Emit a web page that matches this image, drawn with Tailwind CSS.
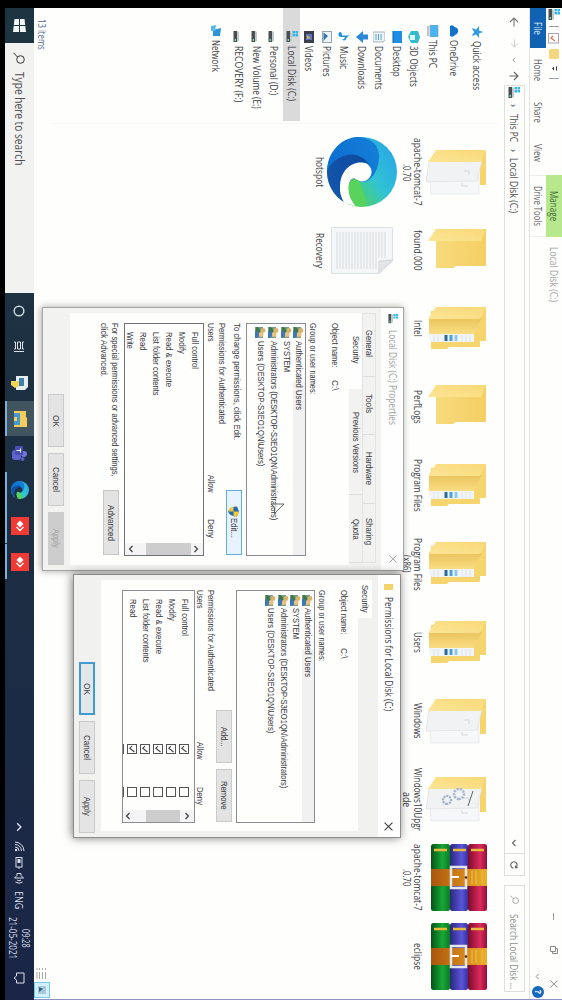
<!DOCTYPE html>
<html lang="en">
<head>
<meta charset="utf-8">
<title>Local Disk (C:)</title>
<script src="https://cdn.jsdelivr.net/npm/@tailwindcss/browser@4"></script>
</head>
<body class="bg-black">
<svg class="absolute size-0">
  <defs>
    <linearGradient id="fy" x1="0" y1="0" x2="0" y2="1"><stop offset="0" stop-color="#f4cf63"/><stop offset="1" stop-color="#f8da7c"/></linearGradient>
    <linearGradient id="fl" x1="0" y1="0" x2="1" y2="1"><stop offset="0" stop-color="#f8d978"/><stop offset="1" stop-color="#fde596"/></linearGradient>
    <linearGradient id="fm" x1="0" y1="0" x2="1" y2="0"><stop offset="0" stop-color="#e9c45e"/><stop offset="1" stop-color="#fadd82"/></linearGradient>
    <linearGradient id="ea" x1="0.3" y1="0" x2="0.85" y2="0.8"><stop offset="0" stop-color="#2aa9e4"/><stop offset=".45" stop-color="#30c3d4"/><stop offset=".8" stop-color="#4bd06e"/><stop offset="1" stop-color="#62d64a"/></linearGradient>
    <linearGradient id="eb" x1="0" y1="0" x2="0.4" y2="1"><stop offset="0" stop-color="#1580d8"/><stop offset="1" stop-color="#0c6fd0"/></linearGradient>
    <linearGradient id="ec" x1="0" y1="0" x2="1" y2="1"><stop offset="0" stop-color="#0d4a9c"/><stop offset="1" stop-color="#1456b0"/></linearGradient>
    <linearGradient id="rr" x1="0" y1="0" x2="0" y2="1"><stop offset="0" stop-color="#8e1036"/><stop offset=".35" stop-color="#dc2a5c"/><stop offset="1" stop-color="#7c0c2e"/></linearGradient>
    <linearGradient id="rb" x1="0" y1="0" x2="0" y2="1"><stop offset="0" stop-color="#35309a"/><stop offset=".35" stop-color="#5a55d8"/><stop offset="1" stop-color="#2b277c"/></linearGradient>
    <linearGradient id="rg" x1="0" y1="0" x2="0" y2="1"><stop offset="0" stop-color="#0b7a22"/><stop offset=".4" stop-color="#18a838"/><stop offset="1" stop-color="#065216"/></linearGradient>
    <linearGradient id="rt" x1="0" y1="0" x2="0" y2="1"><stop offset="0" stop-color="#e8b02c"/><stop offset=".35" stop-color="#d98c1c"/><stop offset="1" stop-color="#a9550e"/></linearGradient>
    <symbol id="folder" viewBox="0 0 46 62"><path d="M1 1H38V31L40 34V51H10Z" fill="url(#fy)"/><path d="M1 1L13 6V59L1 51Z" fill="url(#fl)"/></symbol>
    <symbol id="full" viewBox="0 0 46 62"><path d="M1 1H35V7H41V38L43 40V56H5Z" fill="#f6d56f"/><path d="M27 13H36V57L27 59Z" fill="#f2f5f7"/><path d="M29 17h7M29 21h7M29 25h7M29 49h7M29 53h7" stroke="#dde3e8" stroke-width="1"/><path d="M29 31h6" stroke="#8cc8ee" stroke-width="3"/><path d="M29 36h6" stroke="#4b9fdc" stroke-width="3"/><path d="M29 41h6" stroke="#2b6a9a" stroke-width="3"/><path d="M12 5L28 13V58L12 58Z" fill="url(#fm)"/><path d="M1 1L13 7V59L1 51Z" fill="url(#fl)"/></symbol>
    <symbol id="docs" viewBox="0 0 46 62"><path d="M1 1H36V7H10Z" fill="#f6d56f"/><path d="M24 8H45V56L30 57Z" fill="#f6f7f8" stroke="#dde0e3" stroke-width=".6"/><path d="M12 5L32 10L33 61L12 58Z" fill="#f0f2f4" stroke="#d8dce0" stroke-width=".6"/><path d="M22 23v-5h4M34 25h3v-6" fill="none" stroke="#dde1e6" stroke-width="1.5"/><path d="M1 1L13 6V59L1 51Z" fill="url(#fl)"/></symbol>
    <symbol id="gear" viewBox="0 0 46 62"><use href="#docs" width="46" height="62"/><path d="M15 14L30 19" stroke="#5a6b66" stroke-width="1"/><circle cx="18" cy="28" r="5" fill="none" stroke="#a9b8cc" stroke-width="2.5" stroke-dasharray="2.2 1"/><circle cx="24" cy="40" r="4" fill="none" stroke="#9fb0c6" stroke-width="2.2" stroke-dasharray="2 .9"/></symbol>
    <symbol id="edge" viewBox="0 0 70 70"><circle cx="35" cy="35" r="35" fill="url(#ea)"/><path d="M0 37C2 22 12 17 22 18C34 19 46 26 45 36L40 50L35 70C14 70 -1 54 0 37Z" fill="url(#eb)"/><path d="M30 27C20 31 15 43 19 53C22 62 28 68 35 70C48 70 60 62 65 53L50 45Z" fill="url(#ec)"/><path d="M25.500 36A9.500 9.500 0 1 1 43 40C40 43 41 47 48 48C56 48.500 63 46 69 41.500L65.500 53C60 56 55 57.500 50 57C34 57 25 46 25.500 36Z" fill="#fefefd"/><path d="M44 38C38 46 46 50 56 48C62 47 67 44 70 37L66 30Z" fill="#58d45c"/></symbol>
    <symbol id="rar" viewBox="0 0 67 57"><rect x="0" y="0" width="67" height="19" rx="2.500" fill="url(#rr)"/><rect x="0" y="19" width="67" height="18" rx="2.500" fill="url(#rb)"/><rect x="0" y="37" width="67" height="19" rx="2.500" fill="url(#rg)"/><path d="M6 3v13M6 21v13M6 40v13" stroke="#e9b93c" stroke-width="2.500"/><rect x="25" y="0" width="17" height="56" fill="url(#rt)"/><path d="M27 5H40M27 11H40M27 15H40" stroke="#f0c348" stroke-width="1"/><rect x="23" y="21" width="21" height="15" fill="none" stroke="#e4e6ea" stroke-width="2.500"/><path d="M33 36V28" stroke="#fff" stroke-width="2"/><circle cx="33.500" cy="21" r="1.300" fill="#4d2605"/></symbol>
    <symbol id="ppl" viewBox="0 0 11 11"><rect x="0" y="3" width="11" height="8" fill="#7c9a8a"/><circle cx="3.500" cy="3" r="2.400" fill="#d9b36a"/><circle cx="7.500" cy="5" r="2.500" fill="#e8c080"/><path d="M0 10q0-4 3.500-4t3 4z" fill="#3d7a4a"/><path d="M4 11q0-4 3.500-4T11 11z" fill="#3a78b8"/></symbol>
    <symbol id="disk" viewBox="0 0 12 12"><rect x="0" y="8" width="11" height="3.500" fill="#4a4f54"/><path d="M1 6H10L11 8H0Z" fill="#c4c8ca"/><rect x="8" y="9" width="2" height="1.300" fill="#6fe09a"/></symbol>
    <symbol id="cdisk" viewBox="0 0 12 12"><use href="#disk" width="12" height="12"/><path d="M0 0h2.500v2.500H0zM3 0h2.500v2.500H3zM0 3h2.500v2.500H0zM3 3h2.500v2.500H3z" fill="#31b7ea"/></symbol>
    <symbol id="mag" viewBox="0 0 12 12"><circle cx="7.500" cy="4.500" r="3.800" fill="none" stroke="currentColor"/><path d="M5 7.500L.8 11.500" stroke="currentColor"/></symbol>
    <symbol id="up" viewBox="0 0 8 8"><path d="M1 5.500L4 2.500L7 5.500" fill="none" stroke="currentColor" stroke-width="1.100"/></symbol>
    <symbol id="dn" viewBox="0 0 8 8"><path d="M1 2.500L4 5.500L7 2.500" fill="none" stroke="currentColor" stroke-width="1.100"/></symbol>
    <symbol id="x" viewBox="0 0 8 8"><path d="M.5 .5L7.500 7.500M7.500 .5L.5 7.500" stroke="currentColor" stroke-width=".9" fill="none"/></symbol>
    <symbol id="any" viewBox="0 0 18 18"><rect width="18" height="18" fill="#ef3b33"/><path d="M7 5.500L10.500 9L7 12.500L3.500 9Z" fill="#fff"/><path d="M10 5.500L13.500 9L10 12.500" fill="none" stroke="#fff" stroke-width="1.300"/></symbol>
  </defs>
</svg>
<div class="relative h-[1000px] w-[562px] overflow-hidden bg-black">
<div class="absolute left-[562px] top-0 h-[562px] w-[1000px] origin-top-left rotate-90 overflow-hidden bg-black pl-2 font-['Open_Sans','Noto_Sans',sans-serif] text-[10px] leading-[12px] text-[#3a3d42]">

  <!-- Explorer window -->
  <div class="flex h-[528px] w-[992px] flex-col overflow-hidden border-r border-[#8d92c4] bg-[#fefefd]">
    <!-- title bar -->
    <div class="flex h-4 shrink-0">
      <div class="flex w-[167px] items-center gap-[5px] pl-px">
        <svg class="size-3"><use href="#cdisk"/></svg>
        <i class="h-2.5 w-px bg-gray-400"></i>
        <svg class="ml-px size-[11px]" viewBox="0 0 11 11"><rect x=".5" y=".5" width="9.500" height="10" fill="#fff" stroke="#a9a4ae"/><path d="M3 6l2 2 3-4" stroke="#e0714c" fill="none" stroke-width="1.300"/></svg>
        <i class="h-2.5 w-2.5 rounded-[1px] bg-[#f5d77e]"></i>
        <svg class="ml-px size-2" viewBox="0 0 8 8"><path d="M1.500 1.500H5.500" stroke="#333"/><path d="M1.500 4L3.500 6L5.500 4Z" fill="#333"/></svg>
        <i class="h-2.5 w-px bg-gray-400"></i>
      </div>
      <div class="flex w-[62px] items-center justify-center bg-[#b7e88d] text-[#3e6a35]"><p class="fit w-[30px]">Manage</p></div>
      <div class="flex flex-1 items-center pl-[10px] text-[#a2a2a2]"><p class="fit w-[55px]">Local Disk (C:)</p></div>
      <div class="flex w-[86px] items-center gap-[26px] text-[#8b8b8b]">
        <i class="h-px w-[7px] bg-[#999]"></i>
        <svg class="size-2" viewBox="0 0 8 8"><path d="M.5 2.500H5.500V7.500H.5ZM2.500 2.500V.5H7.500V5.500H5.500" fill="none" stroke="currentColor"/></svg>
        <svg class="size-2"><use href="#x"/></svg>
      </div>
    </div>
    <!-- ribbon tabs -->
    <div class="flex h-[17px] shrink-0 items-center border-b border-[#e3e3e3] text-[#5b5e63]">
      <div class="flex h-4 w-10 items-center justify-center bg-[#1262b3] text-[#d5e6f6]"><p class="fit w-[13px]">File</p></div>
      <p class="fit ml-[11px] w-[22px]">Home</p>
      <p class="fit ml-[21px] w-[21px]">Share</p>
      <p class="fit ml-[21px] w-[18px]">View</p>
      <div class="ml-[13px] flex h-full w-[62px] items-center justify-center border-x border-[#eee]"><p class="fit w-[40px]">Drive Tools</p></div>
      <svg class="ml-auto size-[7px] text-[#888]"><use href="#dn"/></svg>
      <div class="ml-[6px] mr-px flex size-3 items-center justify-center rounded-full bg-[#1668bd] text-[9px] font-bold text-white">?</div>
    </div>
    <!-- address bar -->
    <div class="flex h-[30px] shrink-0 items-center pb-px text-[#4b4b4b]">
      <div class="flex w-[77px] items-center">
        <svg class="ml-[9px] size-[10px]" viewBox="0 0 10 10"><path d="M9.500 5H1M5 1L1 5L5 9" fill="none" stroke="#777" stroke-width="1.100"/></svg>
        <svg class="ml-[12px] size-[9px]" viewBox="0 0 10 10"><path d="M.5 5H9M5 1L9 5L5 9" fill="none" stroke="#ccc" stroke-width="1.100"/></svg>
        <svg class="ml-[9px] size-[6px] text-[#888]"><use href="#dn"/></svg>
        <svg class="ml-[8px] size-[10px]" viewBox="0 0 10 10"><path d="M5 9.500V1M1 5L5 1L9 5" fill="none" stroke="#666" stroke-width="1.100"/></svg>
      </div>
      <div class="flex h-[21px] w-[791px] items-center border border-[#dedede]">
        <svg class="ml-px size-3"><use href="#cdisk"/></svg>
        <span class="ml-[5px] w-[10px] text-[10px]">&#8250;</span>
        <p class="fit w-[28px]">This PC</p>
        <span class="ml-[7px] w-[9px] text-[10px]">&#8250;</span>
        <p class="fit w-[55px]">Local Disk (C:)</p>
        <svg class="ml-auto size-2 text-[#666]"><use href="#dn"/></svg>
        <div class="ml-[6px] flex h-full w-[22px] items-center justify-center border-l border-[#dedede]"><svg class="size-2" viewBox="0 0 8 8"><path d="M6.500 2A3.200 3.200 0 1 0 7.200 4.500M6.800 .2V2.500H4.500" fill="none" stroke="#666" stroke-width="1.100"/></svg></div>
      </div>
      <div class="ml-[9px] flex h-[21px] w-[107px] items-center border border-[#dedede] text-[#8e8e8e]"><svg class="ml-[9px] size-[9px]"><use href="#mag"/></svg><p class="fit ml-[10px] w-[75px]">Search Local Disk ...</p></div>
    </div>
    <!-- body -->
    <div class="flex h-[449px] shrink-0">
      <div id="nav" class="flex w-[115px] shrink-0 flex-col pt-[11px]"></div>
      <div class="grid h-[449px] w-[870px] auto-rows-[93px] grid-cols-[repeat(11,78.4px)] border-l border-[#f7f7f7] pl-[9px] pt-[11px]" id="files"></div>
    </div>
    <div class="flex h-[16px] shrink-0 items-center pl-[11px] text-[#54698c]"><p class="fit w-[31px]">13 items</p>
      <svg class="ml-auto h-[11px] w-[13px]" viewBox="0 0 13 11"><path d="M1 1.500h2M1 4.500h2M1 7.500h2M1 10h2M5 1.500h7M5 4.500h7M5 7.500h7M5 10h7" stroke="#aaa"/></svg>
      <div class="ml-[2px] mr-px flex size-4 items-center justify-center border border-[#72cdeb] bg-[#d3f0fa]"><svg class="size-2" viewBox="0 0 8 8"><rect width="8" height="8" fill="#a6c9dc"/><path d="M1 7L3 3L6 7Z" fill="#33617e"/></svg></div>
    </div>
  </div>

  <!-- Taskbar -->
  <div class="flex h-[29px] w-[992px] items-center bg-linear-to-r from-[#1d3541] via-[#1d2f43] to-[#1a2547]">
    <div class="flex w-[35px] justify-center"><svg class="size-[13px]" viewBox="0 0 13 13"><path d="M0 1.500L6 .8V6H0ZM7 .7L13 0V6H7ZM0 7H6V12.200L0 11.500ZM7 7H13V13L7 12.300Z" fill="#f5f8f9"/></svg></div>
    <div class="flex h-full w-[250px] items-center bg-[#f2f2f1] pl-[9px] text-[12px] text-[#505050]"><svg class="size-3 text-[#333]"><use href="#mag"/></svg><p class="fit ml-[8px] w-[93px]">Type here to search</p></div>
    <div class="flex h-full w-[36px] items-center justify-center"><svg class="size-3" viewBox="0 0 12 12"><circle cx="6" cy="6" r="4.800" stroke="#c9d6da" stroke-width="1.500" fill="none"/></svg></div>
    <div class="flex h-full w-[36px] items-center justify-center"><svg class="size-3" viewBox="0 0 12 12"><path d="M1 1v1.500H8V1M1 11V9.500H8V11M1 4.500H8V7.500H1ZM10.500 1V11" fill="none" stroke="#dbe3e6"/></svg></div>
    <div class="flex h-full w-[36px] items-center justify-center"><svg class="h-[17px] w-[16px]" viewBox="0 0 16 17"><path d="M1 0H12L15 3V12H1Z" fill="#e6edf0"/><path d="M3 4h8v5H3z" fill="#3e7fae"/><path d="M6 9h5l2 4-3 4H6z" fill="#f2d558"/></svg></div>
    <div class="flex h-full w-[35px] items-center justify-center border-b-2 border-[#76b1dd] bg-[#40555f]"><svg class="h-[14px] w-[16px]" viewBox="0 0 16 14"><path d="M0 1H6L7 0H16V13H0Z" fill="#f4cc5c"/><path d="M2 13V7H14V13H10V10H6V13Z" fill="#3f9bd0"/></svg></div>
    <div class="flex h-full w-[36px] items-center justify-center"><svg class="size-4" viewBox="0 0 16 16"><circle cx="8" cy="3" r="3" fill="#7477d8"/><circle cx="13" cy="4.500" r="2" fill="#5a5dc0"/><rect x="4" y="6" width="10" height="9" rx="3" fill="#6164cc"/><rect x="0" y="4" width="9" height="8" rx="1" fill="#4a4db4"/><path d="M2.500 6.500h4M4.500 6.500v4" stroke="#fff"/></svg></div>
    <div class="flex h-full w-[36px] items-center justify-center border-b-2 border-[#76b1dd]"><svg class="size-[18px]" viewBox="0 0 70 70"><circle cx="35" cy="35" r="35" fill="url(#ea)"/><path d="M0 37C2 22 12 17 22 18C34 19 46 26 45 36L40 50L35 70C14 70 -1 54 0 37Z" fill="url(#eb)"/><path d="M30 27C20 31 15 43 19 53C22 62 28 68 35 70C48 70 60 62 65 53L50 45Z" fill="url(#ec)"/><path d="M25.500 36A9.500 9.500 0 1 1 43 40C40 43 41 47 48 48C56 48.500 63 46 69 41.500L65.500 53C60 56 55 57.500 50 57C34 57 25 46 25.500 36Z" fill="#1c3040"/><path d="M44 38C38 46 46 50 56 48C62 47 67 44 70 37L66 30Z" fill="#58d45c"/></svg></div>
    <div class="flex h-full w-[35px] items-center justify-center border-b-2 border-[#76b1dd]"><svg class="size-[18px]"><use href="#any"/></svg></div>
    <div class="ml-px flex h-full w-[35px] items-center justify-center border-b-2 border-[#76b1dd]"><svg class="size-[18px]"><use href="#any"/></svg></div>
    <div class="ml-auto flex h-full items-center text-[#d9deea]">
      <svg class="size-[10px]"><use href="#up"/></svg>
      <svg class="ml-[9px] size-[11px]" viewBox="0 0 11 11"><path d="M1 10A9 9 0 0 1 10 1M3.500 10A6.500 6.500 0 0 1 10 3.500M6 10A4 4 0 0 1 10 6" fill="none" stroke="currentColor"/><circle cx="9" cy="9" r="1.200" fill="currentColor"/></svg>
      <svg class="ml-[5px] h-2 w-[12px]" viewBox="0 0 12 8"><rect x=".5" y="1" width="9.500" height="6" fill="none" stroke="currentColor"/><path d="M2 2.500h4v3H2zM10.500 3h1v2h-1z" fill="currentColor"/></svg>
      <svg class="ml-[4px] size-[12px]" viewBox="0 0 12 12"><path d="M.5 4H2.500L5 1.500V10.500L2.500 8H.5ZM7 4q1.500 2 0 4M9 2.500q2.500 3.500 0 7" fill="none" stroke="currentColor"/></svg>
      <p class="fit ml-[6px] w-[18px]">ENG</p>
      <div class="ml-[8px] flex flex-col items-center gap-px"><p class="fit w-[19px]">09:28</p><p class="fit w-[42px]">21-05-2021</p></div>
      <svg class="ml-[13px] mr-[16px] size-3" viewBox="0 0 12 12"><path d="M1 1H11V8.500H8L6 11L4 8.500H1Z" fill="none" stroke="currentColor"/></svg>
    </div>
  </div>

  <!-- Properties window -->
  <section class="absolute left-[307px] top-[158px] h-[362px] w-[264px] border border-[#a5a5a5] bg-[#f2f2f1] font-['Liberation_Sans',Arial,sans-serif] text-[9px] leading-[11px] text-[#36383c] shadow-[0_1px_7px_rgba(0,0,0,0.35)]">
    <header class="flex h-[22px] items-center bg-[#fefefe] pb-[2px] pl-[6px] font-['Open_Sans',sans-serif] text-[10px] text-[#a0a0a0]"><svg class="size-2.5"><use href="#cdisk"/></svg><p class="fit ml-[6px] w-[95px]">Local Disk (C:) Properties</p><svg class="ml-auto mr-[7px] size-2"><use href="#x"/></svg></header>
    <div class="ml-[5px] mt-[5px] flex h-[14px] w-[250px] border border-[#e3e3e3] text-[9px]">
      <div class="flex w-[63px] items-center border-r border-[#dedede] pl-[16px]"><p class="fit w-[27px]">General</p></div>
      <div class="flex w-[58px] items-center border-r border-[#dedede] pl-[17px]"><p class="fit w-[19px]">Tools</p></div>
      <div class="flex w-[69px] items-center border-r border-[#dedede] pl-[17px]"><p class="fit w-[33px]">Hardware</p></div>
      <div class="flex flex-1 items-center pl-[14px]"><p class="fit w-[27px]">Sharing</p></div>
    </div>
    <div class="ml-[5px] flex h-[13px] w-[250px] text-[9px]">
      <div class="flex w-[76px] items-center bg-[#fefefe] pl-[23px]"><p class="fit w-[28px]">Security</p></div>
      <div class="flex w-[106px] items-center border-r border-[#dedede] pl-[23px]"><p class="fit w-[61px]">Previous Versions</p></div>
      <div class="flex flex-1 items-center border-r border-[#dedede] pl-[24px]"><p class="fit w-[21px]">Quota</p></div>
    </div>
    <div class="ml-[5px] h-[279px] w-[252px] bg-[#fefefd] pl-[10px] pt-[9px]">
      <div class="flex h-[11px]"><p class="fit w-[45px]">Object name:</p><p class="fit ml-[12px] w-[11px]">C:\</p></div>
      <p class="fit mt-[11px] w-[72px]">Group or user names:</p>
      <div class="mt-px h-[60px] w-[233px] border border-[#8a8d92]">
        <div class="flex h-[12px] items-center bg-linear-to-r from-transparent from-25% to-[#f1f1f1] to-25% pl-[3px]"><svg class="size-[11px]"><use href="#ppl"/></svg><p class="fit ml-[3px] w-[69px]">Authenticated Users</p></div>
        <div class="flex h-[13px] items-center pl-[3px]"><svg class="size-[11px]"><use href="#ppl"/></svg><p class="fit ml-[3px] w-[31px]">SYSTEM</p></div>
        <div class="flex h-[13px] items-center pl-[3px]"><svg class="size-[11px]"><use href="#ppl"/></svg><p class="fit ml-[3px] w-[179px]">Administrators (DESKTOP-S3EO1QN\Administrators)</p></div>
        <div class="flex h-[12px] items-center pl-[3px]"><svg class="size-[11px]"><use href="#ppl"/></svg><p class="fit ml-[3px] w-[125px]">Users (DESKTOP-S3EO1QN\Users)</p></div>
      </div>
      <div class="mt-[4px] flex h-[16px]"><p class="fit w-[117px]">To change permissions, click Edit.</p>
        <div class="ml-[50px] flex h-[16px] w-[65px] items-center border border-[#5eaede] bg-[#e6f3fc] pl-[15px]"><svg class="size-[11px]" viewBox="0 0 11 11"><path d="M5.500 0L10.500 2Q10.500 9 5.500 11Q.5 9 .5 2Z" fill="#2767ad"/><path d="M5.500 0L10.500 2V5.500H5.500ZM.6 5.500H5.500V11Q1 9 .6 5.500Z" fill="#f0ca3a"/></svg><p class="fit ml-px w-[20px]">Edit...</p></div>
      </div>
      <p class="fit -mt-px w-[101px]">Permissions for Authenticated</p>
      <div class="flex h-[10px]"><p class="fit w-[19px]">Users</p><p class="fit ml-[133px] w-[18px]">Allow</p><p class="fit ml-[26px] w-[19px]">Deny</p></div>
      <div class="mt-[2px] flex h-[80px] w-[233px] border border-[#6f7276] pl-[8px] pt-[3px]">
        <div class="flex flex-1 flex-col gap-[2px]"><p class="fit w-[37px]">Full control</p><p class="fit w-[22px]">Modify</p><p class="fit w-[55px]">Read &amp; execute</p><p class="fit w-[64px]">List folder contents</p><p class="fit w-[19px]">Read</p><p class="fit w-[17px]">Write</p></div>
        <div class="-mt-[3px] flex h-[78px] w-[12px] flex-col items-center bg-[#f4f4f4]"><svg class="mt-[3px] size-2"><use href="#up"/></svg><i class="mt-px block h-[45px] w-full bg-[#cdcdcd]"></i><svg class="mt-[11px] size-2"><use href="#dn"/></svg></div>
      </div>
      <div class="mt-[4px] flex"><div class="w-[167px]"><p class="fit w-[154px]">For special permissions or advanced settings,</p><p class="fit w-[54px]">click Advanced.</p></div>
        <div class="mt-px flex h-[16px] w-[65px] items-center justify-center border border-[#c6c6c6] bg-[#e3e3e3]"><p class="fit w-[36px]">Advanced</p></div></div>
    </div>
    <div class="mt-[6px] flex gap-[6px] pl-[86px]">
      <div class="flex h-[16px] w-[53px] items-center justify-center border border-[#c9c9c9] bg-[#e4e4e4]"><p class="fit w-[12px]">OK</p></div>
      <div class="flex h-[16px] w-[53px] items-center justify-center border border-[#c9c9c9] bg-[#e4e4e4]"><p class="fit w-[25px]">Cancel</p></div>
      <div class="flex h-[16px] w-[53px] items-center justify-center bg-[#cdcdcd] text-[#a0a0a0]"><p class="fit w-[19px]">Apply</p></div>
    </div>
  </section>

  <!-- Permissions window -->
  <section class="absolute left-[574px] top-[161px] h-[328px] w-[264px] border border-[#8b8b8b] bg-[#f1f1f0] font-['Liberation_Sans',Arial,sans-serif] text-[9px] leading-[11px] text-[#36383c] shadow-[0_1px_9px_rgba(0,0,0,0.5)]">
    <header class="flex h-[22px] items-center bg-[#fefefe] pl-[9px] font-['Open_Sans',sans-serif] text-[10px]"><i class="h-[9px] w-[6px] bg-[#f5d36c]"></i><p class="fit ml-[7px] w-[114px]">Permissions for Local Disk (C:)</p><svg class="ml-auto mr-[6px] size-[9px]"><use href="#x"/></svg></header>
    <div class="ml-[5px] mt-[6px] flex h-[14px] w-[38px] items-center bg-[#fefefd] pl-[5px]"><p class="fit w-[28px]">Security</p></div>
    <div class="ml-[5px] h-[257px] w-[251px] bg-[#fefefd] pl-[10px] pt-[9px]">
      <div class="flex h-[11px]"><p class="fit w-[45px]">Object name:</p><p class="fit ml-[13px] w-[11px]">C:\</p></div>
      <p class="fit mt-[11px] w-[72px]">Group or user names:</p>
      <div class="mt-px h-[79px] w-[233px] border border-[#8a8d92]">
        <div class="flex h-[12px] items-center bg-linear-to-r from-transparent from-25% to-[#f1f1f1] to-25% pl-[4px]"><svg class="size-[11px]"><use href="#ppl"/></svg><p class="fit ml-[2px] w-[69px]">Authenticated Users</p></div>
        <div class="flex h-[12px] items-center pl-[4px]"><svg class="size-[11px]"><use href="#ppl"/></svg><p class="fit ml-[2px] w-[31px]">SYSTEM</p></div>
        <div class="flex h-[13px] items-center pl-[4px]"><svg class="size-[11px]"><use href="#ppl"/></svg><p class="fit ml-[2px] w-[180px]">Administrators (DESKTOP-S3EO1QN\Administrators)</p></div>
        <div class="flex h-[12px] items-center pl-[4px]"><svg class="size-[11px]"><use href="#ppl"/></svg><p class="fit ml-[2px] w-[125px]">Users (DESKTOP-S3EO1QN\Users)</p></div>
      </div>
      <div class="mt-[4px] flex gap-[6px] pl-[120px]">
        <div class="flex h-[16px] w-[53px] items-center justify-center border border-[#cbcbcb] bg-[#e3e3e3]"><p class="fit w-[20px]">Add...</p></div>
        <div class="flex h-[16px] w-[53px] items-center justify-center border border-[#cbcbcb] bg-[#e3e3e3]"><p class="fit w-[29px]">Remove</p></div>
      </div>
      <p class="fit w-[101px]">Permissions for Authenticated</p>
      <div class="flex h-[10px]"><p class="fit w-[19px]">Users</p><p class="fit ml-[133px] w-[18px]">Allow</p><p class="fit ml-[27px] w-[18px]">Deny</p></div>
      <div class="flex h-[73px] w-[233px] overflow-hidden border border-[#8a8d92] pl-[8px]">
        <div id="perms" class="flex w-[211px] flex-col pt-[3px]"></div>
        <div class="flex h-full w-[12px] flex-col items-center bg-[#f4f4f4]"><svg class="mt-[3px] size-2"><use href="#up"/></svg><i class="mt-[3px] block h-[34px] w-full bg-[#cdcdcd]"></i><svg class="mt-[14px] size-2"><use href="#dn"/></svg></div>
      </div>
    </div>
    <div class="mt-[6px] flex gap-[6px] pl-[87px]">
      <div class="flex h-[16px] w-[53px] items-center justify-center border-2 border-[#409bd2] bg-[#e4e7e9]"><p class="fit w-[12px]">OK</p></div>
      <div class="flex h-[16px] w-[53px] items-center justify-center border border-[#c9c9c9] bg-[#e4e4e4]"><p class="fit w-[25px]">Cancel</p></div>
      <div class="flex h-[16px] w-[53px] items-center justify-center border border-[#c9c9c9] bg-[#e4e4e4]"><p class="fit w-[19px]">Apply</p></div>
    </div>
  </section>

  <svg class="absolute left-[503px] top-[277px] h-[16px] w-[12px]" viewBox="0 0 12 16"><path d="M1 1V14L4.500 10.500H10.500Z" fill="#fff" fill-opacity=".6" stroke="#555" stroke-width=".9"/></svg>
</div>
</div>
<script>
const I = {
  star:'<path d="M6 0L7.500 4H12L8.500 6.800L10 11.500L6 8.600L2 11.500L3.500 6.800L0 4H4.500Z" fill="#2d9be8"/>',
  cloud:'<path d="M1 10Q-1 7 2 5.500Q3 1 7 2Q10 3 10 5Q13 7 11 10Z" fill="#1372cc"/>',
  pc:'<rect x="0" y="1" width="12" height="8" fill="#48b4f0" stroke="#8aa5b5" stroke-width=".7"/><path d="M1 11h10" stroke="#889"/>',
  cube:'<path d="M6 0L12 2V9L6 12L0 9V2Z" fill="#35bccb"/><path d="M4 5h5v5H4z" fill="#d8f5f7"/>',
  desk:'<rect x="0" y="1" width="12" height="9" fill="#1f8fe6"/><path d="M0 10h12" stroke="#0c5fae"/>',
  doc:'<path d="M1 0H9L11 2V12H1Z" fill="#edf3f6" stroke="#93a6b0" stroke-width=".8"/><path d="M3 4h6M3 6.500h6M3 9h6" stroke="#5ba4cf"/>',
  down:'<path d="M3.500 0H8.500V5H12L6 12L0 5H3.500Z" fill="#2b88da"/>',
  music:'<path d="M4.500 0Q5 3 9 4.500Q10 6 8.500 8Q8.500 5.500 6 5V9.500Q5 12 2.500 11.500Q0 10 2 8.300L4.500 8Z" fill="#1f93e0"/>',
  pic:'<rect x=".5" y="1.500" width="11" height="9" fill="#eaf4fa" stroke="#96a4ae"/><path d="M1.500 9.500L5 5L8 8L10.500 9.500Z" fill="#33789d"/>',
  vid:'<rect x="0" y="1" width="12" height="10" fill="#3b3f4c"/><path d="M3 3h6v6H3z" fill="#5974bd"/><path d="M4 8l3-4 1 4z" fill="#d6b153"/>',
  disk:'<use href="#disk" width="12" height="12"/>', cdisk:'<use href="#cdisk" width="12" height="12"/>',
  net:'<path d="M3 1L11 2V9L5 9Z" fill="#2c94d8"/><path d="M0 6L6 7V11L1 11Z" fill="#58b6ea"/>'
};
const nav = [
  ['star','w-[49px]','Quick access','h-[22px] pl-[18px]'],['cloud','w-[36px]','OneDrive','h-[23px] pl-[17px]'],['pc','w-[28px]','This PC','h-[20px] pl-[17px]'],
  ['cube','w-[41px]','3D Objects','h-[17.5px] pl-[23px]'],['desk','w-[31px]','Desktop','h-[17.5px] pl-[23px]'],['doc','w-[44px]','Documents','h-[17.5px] pl-[23px]'],
  ['down','w-[43px]','Downloads','h-[17.5px] pl-[23px]'],['music','w-[23px]','Music','h-[17.5px] pl-[23px]'],['pic','w-[31px]','Pictures','h-[17.5px] pl-[23px]'],
  ['vid','w-[25px]','Videos','h-[17.5px] pl-[23px]'],['cdisk','w-[55px]','Local Disk (C:)','h-[17.5px] w-[113px] bg-[#dadada] pl-[23px]'],['disk','w-[49px]','Personal (D:)','h-[17.5px] pl-[23px]'],
  ['disk','w-[63px]','New Volume (E:)','h-[17.5px] pl-[23px]'],['disk','w-[56px]','RECOVERY (F:)','h-[17.5px] pl-[23px]'],['net','w-[32px]','Network','mt-[3px] h-[22px] pl-[17px]']
];
document.getElementById('nav').innerHTML = nav.map(([i,w,t,c]) => `<div class="flex shrink-0 items-center ${c}"><svg class="size-3 shrink-0" viewBox="0 0 12 12">${I[i]}</svg><p class="fit ml-[3px] ${w}">${t}</p></div>`).join('');
const F = (id,...l) => `<div class="flex flex-col items-center"><svg class="mt-px h-[62px] w-[46px] shrink-0"><use href="#${id}"/></svg><div class="mt-[2px] flex flex-col items-center leading-[11px]">${l.map(([w,t]) => `<p class="fit ${w}">${t}</p>`).join('')}</div></div>`;
const R = (w,t,s1,s2) => `<div class="flex flex-col items-center"><svg class="mt-px h-[57px] w-[67px] shrink-0"><use href="#rar"/></svg><div class="mt-[7px] flex flex-col items-center leading-[11px]"><p class="fit ${w}">${t}</p>${s1?`<p class="fit ${s2}">${s1}</p>`:''}</div></div>`;
document.getElementById('files').innerHTML =
  F('docs',['w-[68px]','apache-tomcat-7'],['w-[17px]','.0.70'])+F('folder',['w-[41px]','found.000'])+F('full',['w-[17px]','Intel'])+F('folder',['w-[34px]','PerfLogs'])+
  F('full',['w-[53px]','Program Files'])+F('full',['w-[53px]','Program Files'],['w-[18px]','(x86)'])+F('full',['w-[21px]','Users'])+F('docs',['w-[36px]','Windows'])+
  F('gear',['w-[63px]','Windows10Upgr'],['w-[15px]','ade'])+R('w-[67px]','apache-tomcat-7','.0.70','w-[17px]')+R('w-[27px]','eclipse')+
  `<div class="flex flex-col items-center"><svg class="-mt-[2px] size-[70px] shrink-0"><use href="#edge"/></svg><p class="fit mt-px w-[30px]">hotspot</p></div>
   <div class="flex flex-col items-center"><svg class="mt-[2px] h-[62px] w-[47px] shrink-0" viewBox="0 0 47 62"><path d="M.5 .5H34L46.500 15V61.500H.5Z" fill="#f4f6f8" stroke="#dbe0e4"/><path d="M33 .5L34 14H46.500Z" fill="#e3e6e8" stroke="#c8ccd0" stroke-width=".7"/><path d="M5 8h26M5 11h26M5 14h26M5 17h37M5 20h37M5 23h37M5 26h37M5 29h37M5 32h37M5 35h37M5 38h37M5 41h37M5 44h37M5 47h37M5 50h37M5 53h37M5 56h37" stroke="#d5d9dd" stroke-width=".9"/></svg><p class="fit mt-[5px] w-[35px]">Recovery</p></div>`;
const box = c => `<svg class="size-[10px]" viewBox="0 0 10 10"><rect x=".5" y=".5" width="9" height="9" fill="#fff" stroke="#555"/>${c?'<path d="M2.200 5L4.200 7.200L8 2.500" fill="none" stroke="#444" stroke-width="1.100"/>':''}</svg>`;
document.getElementById('perms').innerHTML = [['w-[37px]','Full control'],['w-[22px]','Modify'],['w-[55px]','Read &amp; execute'],['w-[64px]','List folder contents'],['w-[19px]','Read'],['','']].map(([w,t]) =>
  `<div class="flex h-[13px] shrink-0 items-center"><div class="w-[145px]">${t?`<p class="fit ${w}">${t}</p>`:''}</div>${box(1)}<i class="w-[33px]"></i>${box(0)}</div>`).join('');

// Squeeze or stretch each label to the width of its box, once styles and fonts are in.
const labels = [...document.querySelectorAll('.fit')].map(p => {
  const s = document.createElement('span');
  s.className = 'inline-block origin-left whitespace-nowrap';
  s.append(...p.childNodes);
  p.append(s);
  p.classList.add('shrink-0');
  return [p, s];
});
function fit() {
  for (const [p, s] of labels) if (s.offsetWidth) s.style.transform = `scaleX(${p.offsetWidth / s.offsetWidth})`;
}
fit();
window.addEventListener('load', fit);
document.fonts.ready.then(fit);
</script>
</body>
</html>
